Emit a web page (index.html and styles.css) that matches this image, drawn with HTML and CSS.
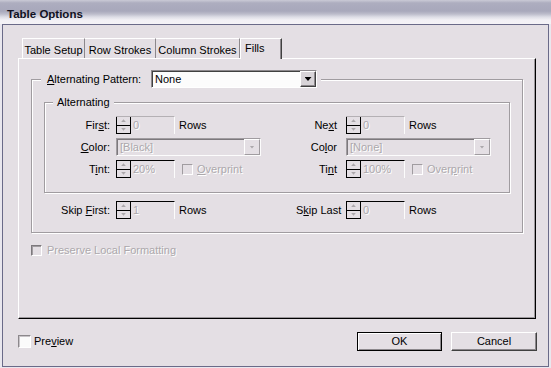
FILE: index.html
```html
<!DOCTYPE html>
<html>
<head>
<meta charset="utf-8">
<title>Table Options</title>
<link rel="stylesheet" href="styles.css">
</head>
<body>
<div class="window">
  <div class="titlebar">Table Options</div>
  <div class="client">
    <div class="tabs">
      <div class="tab w1">Table Setup</div>
      <div class="tab w2">Row Strokes</div>
      <div class="tab w3">Column Strokes</div>
      <div class="tab active">Fills</div>
    </div>
    <div class="panel">
      <fieldset class="group outer">
        <legend class="legend-outer"><span class="legend-row"><span class="pattern-label"><u>A</u>lternating Pattern:</span><span class="select on"><span class="select-text">None</span><span class="drop-btn"><i class="tri"></i></span></span></span></legend>
        <fieldset class="group inner">
          <legend class="legend-inner">Alternating</legend>
          <div class="grid rows">
            <span class="lbl">Fir<u>s</u>t:</span>
            <span class="ctl"><span class="spin"><span class="arrows"><i class="up"></i><i class="dn"></i></span><span class="val dis">0</span></span><span class="unit">Rows</span></span>
            <span class="lbl r">Ne<u>x</u>t</span>
            <span class="ctl"><span class="spin"><span class="arrows"><i class="up"></i><i class="dn"></i></span><span class="val dis">0</span></span><span class="unit">Rows</span></span>

            <span class="lbl"><u>C</u>olor:</span>
            <span class="ctl"><span class="select off"><span class="select-text dis">[Black]</span><span class="drop-btn"><i class="tri"></i></span></span></span>
            <span class="lbl r">Co<u>l</u>or</span>
            <span class="ctl"><span class="select off"><span class="select-text dis">[None]</span><span class="drop-btn"><i class="tri"></i></span></span></span>

            <span class="lbl">T<u>i</u>nt:</span>
            <span class="ctl"><span class="spin dk"><span class="arrows"><i class="up"></i><i class="dn"></i></span><span class="val dis">20%</span></span><span class="cb"></span><span class="cb-text dis"><u>O</u>verprint</span></span>
            <span class="lbl r">Ti<u>n</u>t</span>
            <span class="ctl"><span class="spin dk"><span class="arrows"><i class="up"></i><i class="dn"></i></span><span class="val dis">100%</span></span><span class="cb"></span><span class="cb-text dis">Over<u>p</u>rint</span></span>
          </div>
        </fieldset>
        <div class="grid skip">
          <span class="lbl">Skip <u>F</u>irst:</span>
          <span class="ctl"><span class="spin dk"><span class="arrows"><i class="up"></i><i class="dn"></i></span><span class="val dis">1</span></span><span class="unit">Rows</span></span>
          <span class="lbl r">S<u>k</u>ip Last</span>
          <span class="ctl"><span class="spin dk"><span class="arrows"><i class="up"></i><i class="dn"></i></span><span class="val dis">0</span></span><span class="unit">Rows</span></span>
        </div>
      </fieldset>
      <div class="check"><span class="cb dark"></span><span class="check-text dis">Preserve Local Formatting</span></div>
    </div>
    <div class="footer">
      <div class="preview"><span class="cb-white"></span><span>Pre<u>v</u>iew</span></div>
      <div class="buttons">
        <button class="btn default">OK</button>
        <button class="btn cancel">Cancel</button>
      </div>
    </div>
  </div>
</div>
</body>
</html>
```

FILE: styles.css
```css
* { box-sizing: border-box; }
html, body { margin: 0; padding: 0; }
body {
  width: 551px;
  height: 368px;
  overflow: hidden;
  background: #e9e7ee;
  font-family: "Liberation Sans", Arial, sans-serif;
  font-size: 11px;
  line-height: 13px;
  color: #000;
}
u { text-decoration: underline; text-underline-offset: 1px; }

.window {
  width: 551px;
  height: 368px;
  display: flex;
  flex-direction: column;
  background: #e9e7ee;
}

.titlebar {
  flex: none;
  height: 24px;
  padding: 8px 0 0 7px;
  font-weight: bold;
  font-size: 11.5px;
  line-height: 13px;
  color: #111122;
  background: linear-gradient(to bottom, #cacad6 0px, #adadbf 3px, #a8a8bb 11px, #bcbccb 14px, #dddde6 17px, #f2f0f5 20px, #f4f2f6 24px);
}

.client {
  flex: 1;
  display: flex;
  flex-direction: column;
  margin: 0 2px 1px;
  border: 1px solid #6a6a88;
  background: #e4dfe4;
  padding-top: 13px;
}

/* tabs */
.tabs {
  flex: none;
  display: flex;
  height: 20px;
  margin-left: 19px;
}
.tab {
  height: 20px;
  padding-top: 4px;
  line-height: 14px;
  text-align: center;
  white-space: nowrap;
  border-top: 1px solid #fff;
  border-right: 1px solid #8c888c;
}
.w1 { width: 63px; border-left: 1px solid #fff; }
.w2 { width: 71px; }
.w3 { width: 84px; }
.tab.active {
  width: 42px;
  height: 21px;
  padding: 2px 0 0 4px;
  text-align: left;
  border-left: 1px solid #fff;
  border-right: 1px solid #404040;
  box-shadow: inset -1px 0 0 #8c888c;
  background: #e4dfe4;
  position: relative;
  z-index: 1;
}

/* panel */
.panel {
  flex: 1;
  margin: 0 12px 0 15px;
  border-top: 1px solid #fff;
  border-left: 1px solid #fff;
  border-right: 1px solid #000;
  border-bottom: 1px solid #000;
  box-shadow: inset -1px -1px 0 #9c989c;
  padding: 11px 12px 0;
}

.group {
  margin: 0;
  padding: 0;
  min-width: 0;
  border: 1px solid #a09ca0;
  box-shadow: inset 1px 1px 0 #fff, 1px 1px 0 #fff;
}
.group legend { background: #e4dfe4; }
.legend-outer {
  margin-left: 9px;
  padding: 0 4px 0 6px;
}
.legend-row {
  display: flex;
  align-items: center;
  height: 18px;
}
.pattern-label { width: 104px; white-space: nowrap; }

.inner { margin: 8px 12px 0; }
.legend-inner {
  margin-left: 8px;
  padding: 0 4px;
  line-height: 12px;
}

.grid {
  display: grid;
  grid-template-columns: 71px 180px 50px 146px;
  grid-auto-rows: 18px;
  row-gap: 4px;
  align-items: center;
}
.rows { padding: 8px 0 14px; }
.skip { margin-top: 8px; padding: 0 0 13px 13px; }

.lbl { text-align: right; padding-right: 6px; white-space: nowrap; }
.lbl.r { padding-right: 9px; }
.ctl { display: flex; align-items: center; height: 18px; white-space: nowrap; }
.unit { margin-left: 4px; }

.dis { color: #aca8ac; text-shadow: 1px 1px 0 #fff; }

/* spinner */
.spin {
  flex: none;
  display: flex;
  width: 59px;
  height: 18px;
  border-top: 1px solid #b4b0b4;
  border-right: 1px solid #fcfcfc;
}
.spin.dk { border-top-color: #000; }
.arrows {
  flex: none;
  width: 15px;
  display: flex;
  flex-direction: column;
  border: 1px solid #000;
  border-top: 0;
}
.arrows i {
  flex: 1;
  display: flex;
  align-items: center;
  justify-content: center;
}
.arrows i + i { border-top: 1px solid #000; }
.arrows i::after {
  content: "";
  width: 5px;
  height: 3px;
  background: #aca8ac;
}
.arrows .up::after { clip-path: polygon(50% 0, 100% 100%, 0 100%); }
.arrows .dn::after { clip-path: polygon(0 0, 100% 0, 50% 100%); }
.val { padding-left: 2px; line-height: 17px; }

/* selects */
.select {
  flex: none;
  display: flex;
  align-items: center;
  height: 18px;
  border: 1px solid;
  border-color: #8c888c #fff #fff #8c888c;
  box-shadow: inset 1px 1px 0 #404040;
}
.select.on { width: 166px; background: #fcfcfc; }
.select.off {
  width: 145px;
  border-color: #a09ca0 #fcfcfc #fcfcfc #a09ca0;
  box-shadow: inset 1px 1px 0 #7c787c;
}
.select-text { flex: 1; padding-left: 3px; white-space: nowrap; }
.drop-btn {
  flex: none;
  width: 16px;
  height: 16px;
  display: flex;
  align-items: center;
  justify-content: center;
  background: #d8d4d8;
  border: 1px solid;
  border-color: #fff #404040 #404040 #fff;
  box-shadow: inset -1px -1px 0 #8c888c;
}
.tri {
  width: 7px;
  height: 4px;
  background: #000;
  clip-path: polygon(0 0, 100% 0, 50% 100%);
}
.select.off .drop-btn {
  background: #e4dfe4;
  border-color: #fff #a09ca0 #a09ca0 #fff;
  box-shadow: none;
}
.select.off .tri { background: #aca8ac; width: 5px; height: 3px; }

/* checkboxes */
.cb {
  flex: none;
  width: 11px;
  height: 11px;
  border: 1px solid;
  border-color: #a09ca0 #fff #fff #a09ca0;
}
.ctl .cb { margin-left: 7px; }
.cb-text { margin-left: 4px; }
.cb.dark {
  border-color: #7c787c #fff #fff #7c787c;
  box-shadow: inset 1px 1px 0 #a09ca0;
}
.check {
  display: flex;
  align-items: center;
  height: 11px;
  margin-top: 12px;
}
.check-text { margin-left: 5px; }

/* footer */
.footer {
  flex: none;
  height: 47px;
  display: flex;
  align-items: center;
  padding: 13px 11px 15px 15px;
}
.preview { display: flex; align-items: center; }
.cb-white {
  flex: none;
  width: 13px;
  height: 13px;
  margin-right: 3px;
  background: #fbfbfb;
  border: 1px solid;
  border-color: #8c888c #fff #fff #8c888c;
  box-shadow: inset 1px 1px 0 #c8c4c8;
}
.buttons { margin-left: auto; display: flex; gap: 9px; }
.btn {
  appearance: none;
  margin: 0;
  padding: 0;
  width: 85px;
  height: 19px;
  font: 11px/13px "Liberation Sans", Arial, sans-serif;
  color: #000;
  background: #e4dfe4;
  border: 1px solid;
  border-color: #fff #404040 #404040 #fff;
  box-shadow: inset -1px -1px 0 #8c888c;
}
.btn.default {
  border-color: #000;
  box-shadow: inset 1px 1px 0 #fff, inset -1px -1px 0 #8c888c;
}
.btn.cancel { width: 86px; }
```
